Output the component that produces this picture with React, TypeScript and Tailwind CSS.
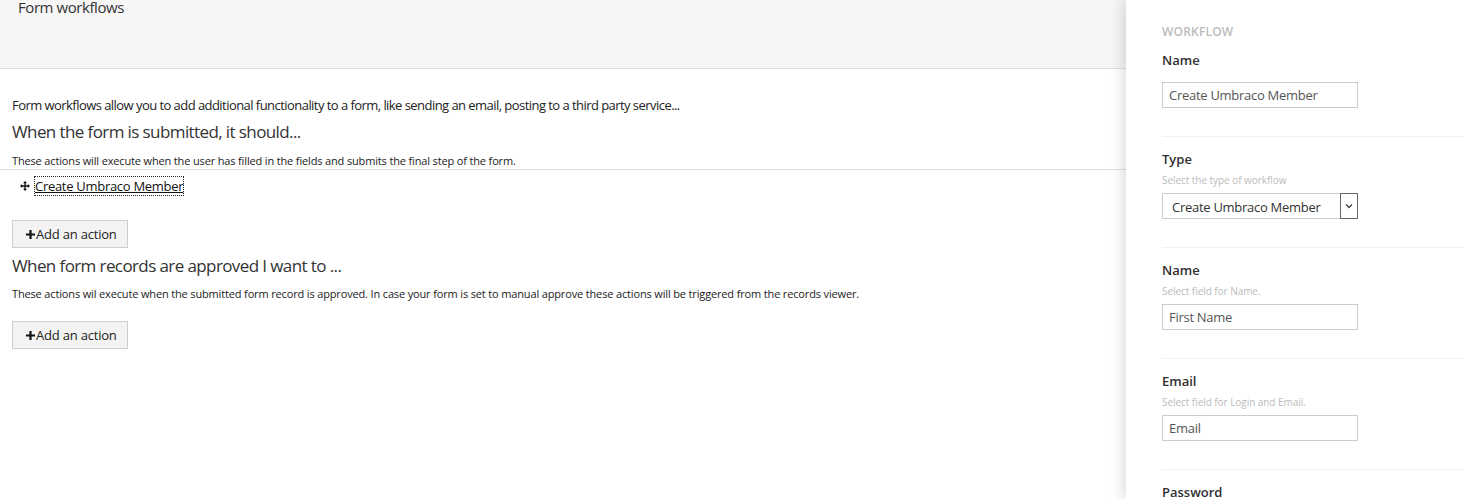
import React from "react";

const MoveIcon = () => (
  <svg width="10" height="10" viewBox="0 0 10 10" className="shrink-0">
    <path d="M5 1 L5 9 M1 5 L9 5" stroke="#111" strokeWidth="1.3" fill="none" />
    <path d="M5 0 L3 2.2 L7 2.2 Z M5 10 L3 7.8 L7 7.8 Z M0 5 L2.2 3 L2.2 7 Z M10 5 L7.8 3 L7.8 7 Z" fill="#111" />
  </svg>
);

const AddButton = ({ className }: { className?: string }) => (
  <button
    className={`flex h-[28px] w-[116px] items-center border border-[#cfcfcf] bg-[#f3f3f3] pt-[2px] pl-[13px] text-[13px] tracking-[-0.2px] text-[#222] ${className ?? ""}`}
  >
    <svg width="9" height="9" viewBox="0 0 9 9" className="mr-[1px] mb-[1px] shrink-0">
      <path d="M4.5 0 V9 M0 4.5 H9" stroke="#111" strokeWidth="2.2" />
    </svg>
    Add an action
  </button>
);

interface FieldProps {
  label: string;
  hint?: string;
  value: string;
  select?: boolean;
}

const Field = ({ label, hint, value, select }: FieldProps) => (
  <div className="pb-[28px]">
    <div className="text-[13px] leading-[18px] font-semibold text-[#303033]">{label}</div>
    {hint ? (
      <div className="mt-[5px] text-[10px] leading-[14px] tracking-[-0.05px] text-[#bbbbbb]">{hint}</div>
    ) : null}
    {select ? (
      <div className="mt-[6px] flex h-[26px] w-[196px] items-stretch border border-[#cccccc]">
        <div className="flex flex-1 items-center pt-[3px] pl-[9px] text-[13px] tracking-[-0.28px] text-[#333]">
          {value}
        </div>
        <div className="-my-px -mr-px flex w-[18px] items-center justify-center border border-[#666]">
          <svg width="8" height="6" viewBox="0 0 8 6">
            <path d="M1 1.5 L4 4.5 L7 1.5" stroke="#444" strokeWidth="1.4" fill="none" />
          </svg>
        </div>
      </div>
    ) : (
      <div
        className={`${hint ? "mt-[6px]" : "mt-[13px]"} flex h-[26px] w-[196px] items-center border border-[#cccccc] pt-[2px] pl-[6px] text-[13px] tracking-[-0.28px] text-[#555]`}
      >
        {value}
      </div>
    )}
  </div>
);

export default function App() {
  return (
    <div
      className="flex h-[499px] w-full overflow-hidden bg-white text-[#333]"
      style={{ fontFamily: '"Open Sans", "Liberation Sans", sans-serif' }}
    >
      {/* main column */}
      <div className="flex min-w-0 flex-1 flex-col">
        <div className="h-[69px] shrink-0 border-b border-[#dcdcdc] bg-[#f6f6f6] pl-[18px]">
          <div className="-mt-[3px] text-[15px] leading-5 tracking-[-0.43px] text-[#333]">Form workflows</div>
        </div>

        <div className="mt-[27px] px-3 text-[13px] leading-[18px] tracking-[-0.55px] text-[#222]">
          Form workflows allow you to add additional functionality to a form, like sending an email, posting to a third party service...
        </div>

        <h2 className="mt-[6px] px-3 text-[17px] leading-[24px] tracking-[-0.6px] text-[#333]">
          When the form is submitted, it should...
        </h2>
        <div className="mt-[9px] px-3 text-[11px] leading-[16px] tracking-[-0.15px] text-[#222]">
          These actions will execute when the user has filled in the fields and submits the final step of the form.
        </div>
        <div className="h-px bg-[#dddddd]" />

        <div className="mt-[7px] flex items-center gap-[5px] pl-5">
          <MoveIcon />
          <span className="text-[13px] leading-[18px] tracking-[-0.29px] text-[#111] underline outline outline-1 outline-dotted outline-[#222]">
            Create Umbraco Member
          </span>
        </div>

        <AddButton className="mx-3 mt-[25px]" />

        <h2 className="mt-[6px] px-3 text-[17px] leading-[24px] tracking-[-0.6px] text-[#333]">
          When form records are approved I want to ...
        </h2>
        <div className="mt-[8px] px-3 text-[11px] leading-[16px] tracking-[-0.15px] text-[#222]">
          These actions wil execute when the submitted form record is approved. In case your form is set to manual approve these actions will be triggered from the records viewer.
        </div>

        <AddButton className="mx-3 mt-[19px]" />
      </div>

      {/* settings panel */}
      <div className="relative z-10 w-[338px] shrink-0 bg-white pt-[24px] pl-[36px] shadow-[-4px_0_12px_rgba(0,0,0,0.13)]">
        <div className="text-[12px] leading-[16px] font-semibold tracking-[0.2px] text-[#bbbbbb] uppercase">
          Workflow
        </div>
        <div className="mt-[11px]">
          <Field label="Name" value="Create Umbraco Member" />
        </div>
        <div className="border-t border-[#f0f0f0] pt-[13px]">
          <Field label="Type" hint="Select the type of workflow" value="Create Umbraco Member" select />
        </div>
        <div className="border-t border-[#f0f0f0] pt-[13px]">
          <Field label="Name" hint="Select field for Name." value="First Name" />
        </div>
        <div className="border-t border-[#f0f0f0] pt-[13px]">
          <Field label="Email" hint="Select field for Login and Email." value="Email" />
        </div>
        <div className="border-t border-[#f0f0f0] pt-[13px]">
          <Field label="Password" hint="Select field for Password." value="Password" />
        </div>
      </div>
    </div>
  );
}
